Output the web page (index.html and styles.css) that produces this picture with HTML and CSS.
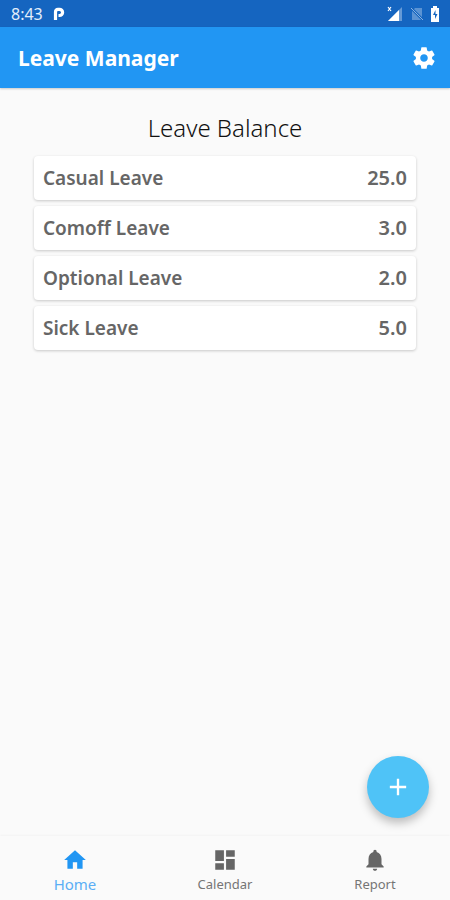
FILE: index.html
```html
<!DOCTYPE html>
<html lang="en">
<head>
  <meta charset="UTF-8">
  <meta name="viewport" content="width=device-width, initial-scale=1.0">
  <title>Leave Manager</title>
  <link rel="stylesheet" href="styles.css">
</head>
<body>
<div class="status-bar">
  <span class="time">8:43</span>
  <svg class="app-icon" width="12" height="14" viewBox="0 0 12 14"><path d="M2.500 13V5Q2.500 2.300 5 2.300h1.500a2.900 2.900 0 0 1 0 6.200H5.500" fill="none" stroke="#fff" stroke-width="3.200"/></svg>
  <div class="status-icons">
    <svg width="17" height="16" viewBox="0 0 17 16">
      <path d="M15 1v14H1z" fill="#fff" opacity=".35"/>
      <path d="M12 4v11H1z" fill="#fff"/>
      <path d="M1 1l3 4M4 1L1 5" stroke="#fff" stroke-width="1.200"/>
    </svg>
    <svg width="14" height="16" viewBox="0 0 14 16">
      <path d="M5 2h7v12H2V5z" fill="#fff" opacity=".3"/>
      <path d="M1 2l12 12" stroke="#1565c0" stroke-width="2.500"/>
      <path d="M1 2l12 12" stroke="#fff" stroke-width="1" opacity=".5"/>
    </svg>
    <svg width="10" height="16" viewBox="0 0 10 16">
      <path d="M3 0h4v2h2v14H1V2h2z" fill="#fff"/>
      <path d="M5.500 4L3 9h2v4l2.500-5h-2z" fill="#1565c0"/>
    </svg>
  </div>
</div>

<header class="app-bar">
  <h1>Leave Manager</h1>
  <button class="settings-button" aria-label="Settings">
    <svg width="26" height="26" viewBox="0 0 24 24" fill="#fff"><path d="M19.430 12.980c.040-.320.070-.640.070-.980s-.030-.660-.070-.980l2.110-1.650c.190-.150.240-.420.120-.640l-2-3.460c-.120-.220-.390-.300-.610-.220l-2.490 1c-.520-.400-1.080-.730-1.690-.980l-.380-2.650C14.460 2.180 14.250 2 14 2h-4c-.250 0-.460.180-.490.420l-.380 2.650c-.610.250-1.170.590-1.690.980l-2.490-1c-.230-.090-.490 0-.610.220l-2 3.460c-.130.220-.070.490.120.640l2.110 1.650c-.040.320-.070.650-.070.980s.030.660.070.980l-2.110 1.650c-.190.150-.240.420-.120.640l2 3.460c.120.220.390.300.610.220l2.490-1c.520.400 1.080.730 1.690.980l.380 2.650c.030.240.240.420.490.420h4c.250 0 .460-.180.490-.420l.380-2.650c.610-.250 1.170-.590 1.690-.980l2.490 1c.230.090.490 0 .610-.220l2-3.460c.120-.220.070-.490-.120-.640l-2.110-1.650zM12 15.500c-1.930 0-3.500-1.570-3.500-3.500s1.570-3.500 3.500-3.500 3.500 1.570 3.500 3.500-1.570 3.500-3.500 3.500z"/></svg>
  </button>
</header>

<main class="content">
  <h2>Leave Balance</h2>
  <ul class="leave-list">
    <li class="leave-card"><span>Casual Leave</span><span class="days">25.0</span></li>
    <li class="leave-card"><span>Comoff Leave</span><span class="days">3.0</span></li>
    <li class="leave-card"><span>Optional Leave</span><span class="days">2.0</span></li>
    <li class="leave-card"><span>Sick Leave</span><span class="days">5.0</span></li>
  </ul>
</main>

<footer class="bottom">
  <button class="add-button" aria-label="Add leave">
    <svg width="28" height="28" viewBox="0 0 24 24" fill="#fff"><path d="M19 13h-6v6h-2v-6H5v-2h6V5h2v6h6v2z"/></svg>
  </button>
  <nav class="bottom-nav">
    <a class="nav-item active" href="#home">
      <svg width="26" height="26" viewBox="0 0 24 24"><path d="M10 20v-6h4v6h5v-8h3L12 3 2 12h3v8z"/></svg>
      <span>Home</span>
    </a>
    <a class="nav-item" href="#calendar">
      <svg width="26" height="26" viewBox="0 0 24 24"><path d="M3 13h8V3H3v10zm0 8h8v-6H3v6zm10 0h8V11h-8v10zm0-18v6h8V3h-8z"/></svg>
      <span>Calendar</span>
    </a>
    <a class="nav-item" href="#report">
      <svg width="26" height="26" viewBox="0 0 24 24"><path d="M12 22c1.100 0 2-.900 2-2h-4c0 1.100.890 2 2 2zm6-6v-5c0-3.070-1.640-5.640-4.500-6.320V4c0-.830-.670-1.500-1.500-1.500s-1.500.670-1.500 1.500v.680C7.630 5.360 6 7.920 6 11v5l-2 2v1h16v-1l-2-2z"/></svg>
      <span>Report</span>
    </a>
  </nav>
</footer>
</body>
</html>
```
FILE: styles.css
```css
body {
  display: flex;
  flex-direction: column;
  min-height: 100vh;
  margin: 0;
  background-color: #fafafa;
  font-family: "Noto Sans", sans-serif;
}

h1, h2, ul {
  margin: 0;
  padding: 0;
}

button {
  border: none;
  padding: 0;
  cursor: pointer;
}

svg {
  display: block;
}

.status-bar {
  display: flex;
  align-items: center;
  height: 27px;
  padding: 0 10px 0 11px;
  background-color: #1565c0;
  color: #e3eefb;
}

.time {
  font-size: 16px;
}

.app-icon {
  margin-left: 10px;
}

.status-icons {
  display: flex;
  gap: 6px;
  margin-left: auto;
}

.app-bar {
  display: flex;
  align-items: center;
  justify-content: space-between;
  height: 61px;
  padding: 0 13px 0 18px;
  background-color: #2196f3;
  box-shadow: 0 1px 2px rgba(0, 0, 0, 0.2);
}

.app-bar h1 {
  color: #fff;
  font-size: 21px;
  font-weight: 700;
}

.settings-button {
  background: transparent;
}

.content {
  flex: 1;
  padding: 24px 34px;
}

.content h2 {
  margin-bottom: 12px;
  color: #111;
  font-size: 24px;
  font-weight: 300;
  line-height: 32px;
  text-align: center;
}

.leave-list {
  display: grid;
  gap: 6px;
  list-style: none;
}

.leave-card {
  display: flex;
  align-items: center;
  justify-content: space-between;
  padding: 8px 9px;
  border-radius: 4px;
  background-color: #fff;
  box-shadow: 0 1px 3px rgba(0, 0, 0, 0.2);
  color: #666;
  font-size: 19px;
  font-weight: 600;
  line-height: 28px;
}

.days {
  font-size: 20px;
}

.add-button {
  display: flex;
  align-items: center;
  justify-content: center;
  width: 62px;
  height: 62px;
  margin: 0 21px 18px auto;
  border-radius: 50%;
  background-color: #4fc3f7;
  box-shadow: 0 5px 10px rgba(0, 0, 0, 0.25);
}

.bottom-nav {
  display: flex;
  height: 64px;
  background-color: #fafafa;
  box-shadow: 0 -1px 2px rgba(0, 0, 0, 0.03);
}

.nav-item {
  display: flex;
  flex: 1;
  flex-direction: column;
  align-items: center;
  padding-top: 11px;
  color: #757575;
  fill: #666;
  font-size: 13px;
  line-height: 23px;
  text-decoration: none;
}

.nav-item.active {
  color: #5aaef5;
  fill: #2196f3;
  font-size: 15px;
}
```
